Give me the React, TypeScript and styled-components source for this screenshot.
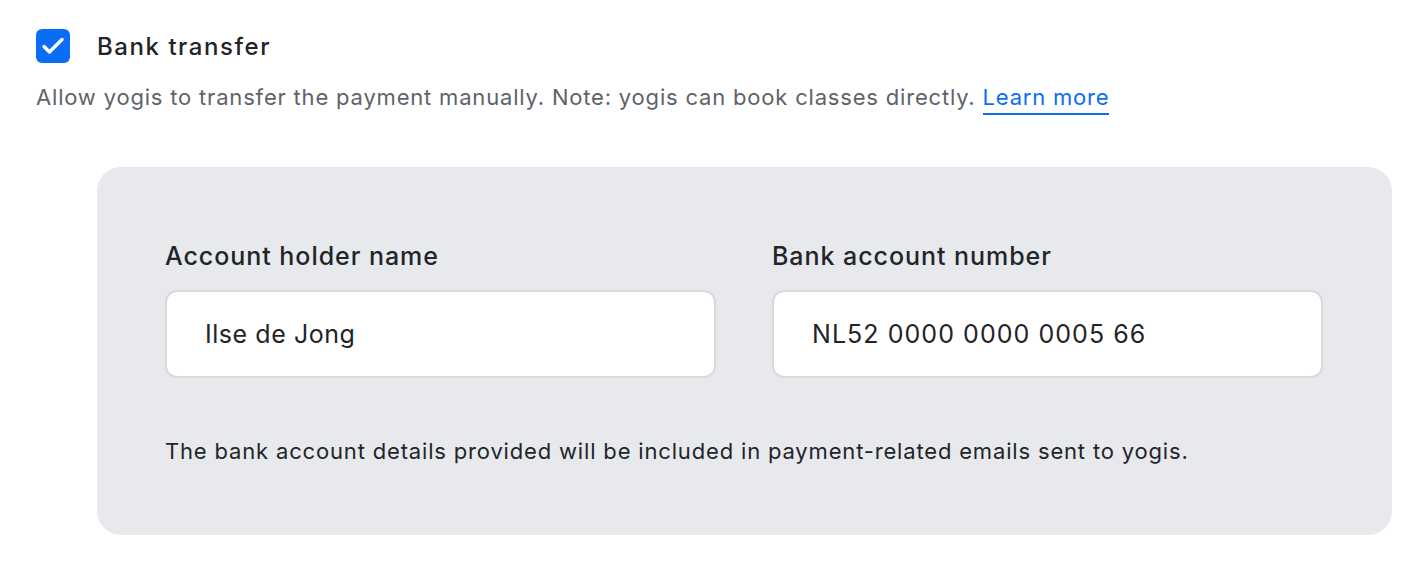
import React, { useState } from "react";
import styled, { createGlobalStyle } from "styled-components";

const GlobalStyle = createGlobalStyle`
  html, body {
    margin: 0;
    padding: 0;
    background: #ffffff;
  }
  body {
    font-family: Inter, "Noto Sans", sans-serif;
    color: #212529;
  }
  * {
    box-sizing: border-box;
  }
`;

const Page = styled.div`
  width: 1422px;
  padding: 29px 30px 0 36px;
`;

const CheckRow = styled.label`
  display: flex;
  align-items: center;
  gap: 27px;
  cursor: pointer;
`;

const CheckBox = styled.span<{ checked: boolean }>`
  width: 34px;
  height: 34px;
  border-radius: 6px;
  background: ${(p) => (p.checked ? "#0b6cf5" : "#ffffff")};
  border: ${(p) => (p.checked ? "none" : "2px solid #c4c7cc")};
  display: flex;
  align-items: center;
  justify-content: center;
  flex-shrink: 0;
`;

const CheckLabel = styled.span`
  font-size: 24px;
  font-weight: 500;
  color: #212529;
  letter-spacing: 1.55px;
`;

const Description = styled.p`
  margin: 18px 0 0;
  font-size: 22px;
  color: #5f6368;
  letter-spacing: 0.81px;
  line-height: 32px;

  a {
    color: #0b6cf5;
    text-decoration: none;
    border-bottom: 2px solid #0b6cf5;
    padding-bottom: 3px;
  }
`;

const Panel = styled.div`
  margin: 54px 0 0 61px;
  width: 1295px;
  background: #e8e9ed;
  border-radius: 24px;
  padding: 75px 68px 69px;
`;

const Fields = styled.div`
  display: grid;
  grid-template-columns: 551px 551px;
  gap: 56px;
`;

const Field = styled.div`
  display: flex;
  flex-direction: column;
  gap: 20px;
`;

const Label = styled.label`
  font-size: 25px;
  font-weight: 500;
  color: #212529;
  line-height: 28px;
  letter-spacing: 0.95px;
`;

const Input = styled.input<{ $spacing?: number }>`
  width: 100%;
  height: 88px;
  border: 2px solid #d8d9db;
  border-radius: 12px;
  background: #ffffff;
  padding: 0 38px;
  font-family: Inter, "Noto Sans", sans-serif;
  font-size: 25px;
  letter-spacing: ${(p) => p.$spacing ?? 0.55}px;
  color: #212529;
  outline: none;
`;

const Note = styled.p`
  margin: 58px 0 0;
  font-size: 22px;
  color: #212529;
  letter-spacing: 0.83px;
  line-height: 30px;
`;

export default function App() {
  const [checked, setChecked] = useState(true);
  const [holder, setHolder] = useState("Ilse de Jong");
  const [iban, setIban] = useState("NL52 0000 0000 0005 66");

  return (
    <>
      <GlobalStyle />
      <Page>
        <CheckRow onClick={() => setChecked(!checked)}>
          <CheckBox checked={checked}>
            {checked && (
              <svg width="34" height="34" viewBox="0 0 34 34" fill="none">
                <path
                  d="M8 17.5l5.5 5.5L26 10.5"
                  stroke="#ffffff"
                  strokeWidth="3.5"
                  strokeLinecap="round"
                  strokeLinejoin="round"
                />
              </svg>
            )}
          </CheckBox>
          <CheckLabel>Bank transfer</CheckLabel>
        </CheckRow>
        <Description>
          Allow yogis to transfer the payment manually. Note: yogis can book classes directly.{" "}
          <a href="#">Learn more</a>
        </Description>
        <Panel>
          <Fields>
            <Field>
              <Label>Account holder name</Label>
              <Input value={holder} onChange={(e) => setHolder(e.target.value)} />
            </Field>
            <Field>
              <Label>Bank account number</Label>
              <Input $spacing={1.05} value={iban} onChange={(e) => setIban(e.target.value)} />
            </Field>
          </Fields>
          <Note>
            The bank account details provided will be included in payment-related emails sent to yogis.
          </Note>
        </Panel>
      </Page>
    </>
  );
}
